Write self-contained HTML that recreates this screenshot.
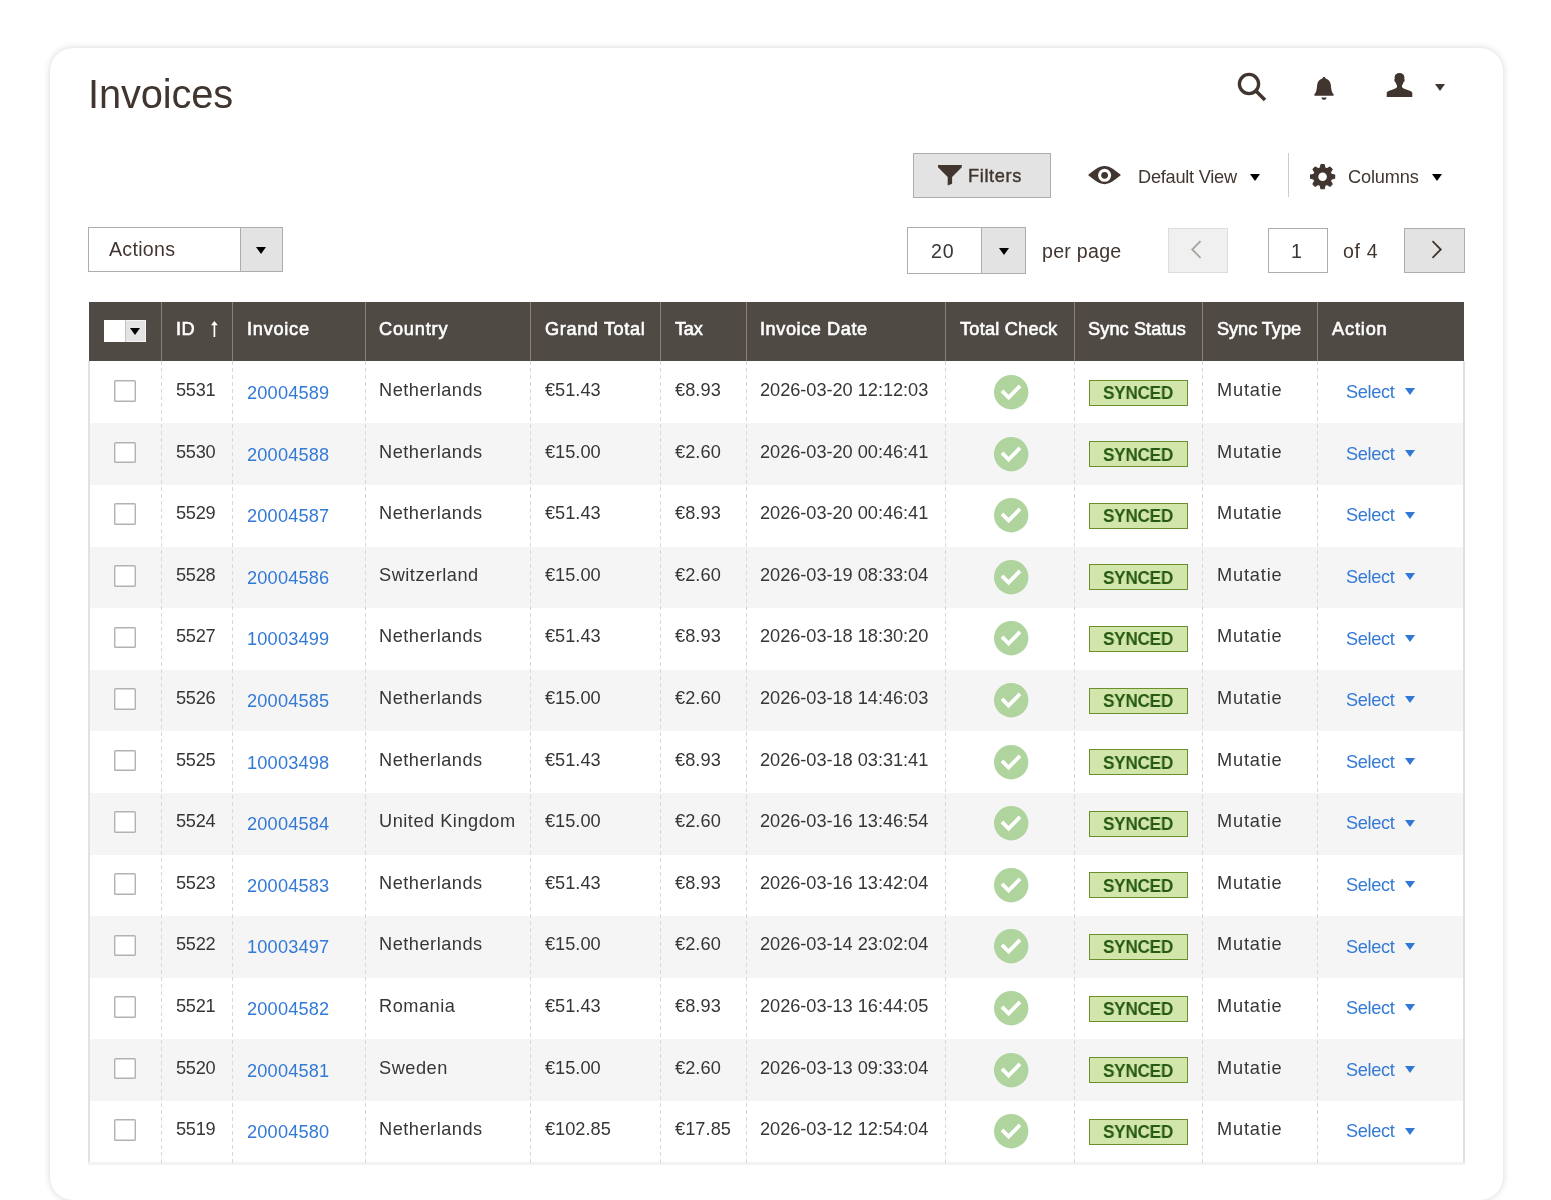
<!DOCTYPE html>
<html lang="en">
<head>
<meta charset="utf-8">
<title>Invoices</title>
<style>
html,body{margin:0;padding:0;background:#fff;}
body{width:1551px;height:1200px;position:relative;overflow:hidden;font-family:"Liberation Sans",sans-serif;}
.card{position:absolute;left:50px;top:48px;width:1453px;height:1152px;background:#fff;border-radius:23px;box-shadow:0 0 7px rgba(0,0,0,.17);}
.t{position:absolute;white-space:pre;line-height:1;display:block;}
.t{line-height:1em;will-change:transform;}
.sb{-webkit-text-stroke:0.6px currentColor;}
.sb.f{-webkit-text-stroke-width:0.4px;}
.abs{position:absolute;box-sizing:border-box;}
.btn{background:#e3e3e3;border:1px solid #adadad;}
.box{background:#fff;border:1px solid #adadad;}
svg{position:absolute;overflow:visible;}
.car{position:absolute;width:0;height:0;border-left:5.8px solid transparent;border-right:5.8px solid transparent;border-top:7.3px solid #000;}
/* table */
.thead{position:absolute;left:89px;top:302px;width:1375px;height:58.6px;background:#504a44;}
.thead i{position:absolute;top:0;width:1.4px;margin-left:-0.2px;height:100%;background:#88817d;}
.row{position:absolute;left:88px;width:1377px;background:#fff;}
.row.alt{background:#f5f5f5;}
.row .t{margin-left:-88px;}
.vl{position:absolute;top:360.6px;height:804px;width:1.4px;margin-left:-0.2px;background:repeating-linear-gradient(180deg,#d8d8d8 0,#d8d8d8 4.2px,transparent 4.2px,transparent 7px);}
.cb{position:absolute;left:26.35px;top:18.35px;width:21.65px;height:21.65px;box-shadow:inset 0 0 0 1.4px #b2b2b2;border-radius:1.6px;background:#fff;}
.badge{position:absolute;left:1001px;top:17.8px;width:97px;height:24px;border:1px solid #6a8f2c;background:#d2e5ab;}
.row .ok{left:906px;top:13.3px;width:34.4px;height:34.4px;}
.row .car{left:1317px;top:26.7px;border-left-width:5px;border-right-width:5px;border-top:7px solid #2f78d6;}
.row .t{z-index:2;}
</style>
</head>
<body>
<div class="card"></div>

<!-- header icons -->
<svg style="left:1236px;top:71px" width="32" height="32" viewBox="0 0 32 32"><circle cx="13" cy="13" r="9.6" fill="none" stroke="#41362f" stroke-width="3.3"/><path d="M20 20l9 9" stroke="#41362f" stroke-width="3.6" fill="none"/></svg>
<svg style="left:1313px;top:76.8px" width="22" height="25" viewBox="0 0 22 25"><path fill="#41362f" d="M11 0c.9 0 1.5.6 1.6 1.5 3.300.9 5 3.400 5.300 7 .3 4.200.9 6.800 2.600 8.800.4.500.4 1.200-.3 1.500H1.800c-.700-.300-.700-1-.300-1.500 1.700-2 2.300-4.600 2.600-8.800.3-3.600 2-6.100 5.300-7C9.500.6 10.100 0 11 0zM8.400 20.500h5.200c-.2 1.400-1.200 2.300-2.600 2.300s-2.400-.9-2.600-2.300z"/></svg>
<svg style="left:1386px;top:72.500px" width="27" height="24" viewBox="0 0 27 24"><path fill="#41362f" d="M13.500 0c3 0 4.900 1.700 4.900 4.300 0 .7-.1 1.300-.2 1.800.5.300.6 1.100.3 2-.2.700-.600 1.100-1 1.200-.3 1.300-.9 2.400-1.500 3.100v1.500c.6 1 1.700 1.600 3.600 2.300l4.800 1.800c1.200.5 1.900 1.200 1.900 2.400V24H.7v-3.600c0-1.200.7-1.900 1.900-2.400l4.800-1.800c1.900-.7 3-1.300 3.600-2.300v-1.500c-.6-.7-1.200-1.800-1.500-3.100-.4-.1-.8-.5-1-1.200-.3-.9-.2-1.700.3-2-.1-.5-.2-1.100-.2-1.800C8.600 1.700 10.500 0 13.500 0z"/></svg>
<i class="car" style="left:1434.500px;top:84px;border-top-color:#41362f"></i>

<!-- toolbar -->
<div class="abs btn" style="left:913px;top:153px;width:138px;height:45px"></div>
<svg style="left:938.200px;top:165px" width="23.800" height="20.500" viewBox="0 0 23.800 20.500"><path fill="#41362f" d="M0 0h23.800v2.200L14.100 12v6.800L9.700 20.500V12L0 2.200z"/></svg>
<svg style="left:1087.7px;top:165.9px" width="33" height="18.2" viewBox="0 0 33 18.2"><path fill="#41362f" d="M0 9.1C5 5.2 10.500 0 16.500 0S28 5.200 33 9.100C28 13 22.500 18.200 16.500 18.200S5 13 0 9.100z"/><circle cx="16.600" cy="9.300" r="6.500" fill="#fff"/><circle cx="16.600" cy="9.300" r="3.400" fill="#41362f"/></svg>
<i class="car" style="left:1250.200px;top:174px"></i>
<div class="abs" style="left:1288px;top:153px;width:1px;height:44px;background:#ccc"></div>
<svg style="left:1309.7px;top:163.6px" width="25.2" height="25.4" viewBox="-12.6 -12.7 25.2 25.4"><path d="M-2.48 -8.65L-1.59 -12.10L1.59 -12.10L2.48 -8.65L4.36 -7.87L7.43 -9.68L9.68 -7.43L7.87 -4.36L8.65 -2.48L12.10 -1.59L12.10 1.59L8.65 2.48L7.87 4.36L9.68 7.43L7.43 9.68L4.36 7.87L2.48 8.65L1.59 12.10L-1.59 12.10L-2.48 8.65L-4.36 7.87L-7.43 9.68L-9.68 7.43L-7.87 4.36L-8.65 2.48L-12.10 1.59L-12.10 -1.59L-8.65 -2.48L-7.87 -4.36L-9.68 -7.43L-7.43 -9.68L-4.36 -7.87Z" fill="#41362f" stroke="#41362f" stroke-width="1.1" stroke-linejoin="round"/><circle r="4.3" fill="#fff"/></svg>
<i class="car" style="left:1431.500px;top:174px"></i>

<!-- actions / paging -->
<div class="abs box" style="left:88px;top:227px;width:195px;height:45px"></div>
<div class="abs btn" style="left:240px;top:227px;width:43px;height:45px"></div>
<i class="car" style="left:256px;top:246.500px"></i>

<div class="abs box" style="left:907px;top:227px;width:119px;height:46.500px"></div>
<div class="abs btn" style="left:981px;top:227px;width:45px;height:46.500px"></div>
<i class="car" style="left:999px;top:248px"></i>

<div class="abs" style="left:1168px;top:228px;width:60px;height:45px;background:#f0f0f0;border:1px solid #ddd"></div>
<svg style="left:1190px;top:240px" width="12" height="19" viewBox="0 0 12 19"><path d="M10.500 1.200L2.200 9.500l8.300 8.300" fill="none" stroke="#a9a39e" stroke-width="1.800"/></svg>
<div class="abs box" style="left:1268px;top:228px;width:60px;height:45px"></div>
<div class="abs btn" style="left:1404px;top:228px;width:61px;height:45px"></div>
<svg style="left:1430.500px;top:240px" width="12" height="19" viewBox="0 0 12 19"><path d="M1.500 1.200l8.300 8.300-8.300 8.300" fill="none" stroke="#41362f" stroke-width="1.800"/></svg>

<!-- table header -->
<div class="thead">
<i style="left:72px"></i><i style="left:143px"></i><i style="left:276px"></i><i style="left:441px"></i><i style="left:571px"></i><i style="left:657px"></i><i style="left:856px"></i><i style="left:985px"></i><i style="left:1113px"></i><i style="left:1228px"></i>
<div class="abs" style="left:15px;top:18px;width:42px;height:22px;background:#e3e3e3;border:1px solid #f4f4f4;border-left:0"></div>
<div class="abs" style="left:15px;top:18px;width:21.500px;height:22px;background:#fff;border-right:1px solid #c4c4c4"></div>
<i class="car" style="left:41.5px;top:26px;background:none;width:0;height:0"></i>
<svg style="left:121.500px;top:18.500px" width="6.800" height="16" viewBox="0 0 6.800 16"><path d="M3.400 16V2" fill="none" stroke="#fff" stroke-width="1.700"/><path d="M3.400 0L6.800 4.300H0z" fill="#fff"/></svg>
</div>

<!-- rows -->
<div class="row" style="top:361.80px;height:61.60px"><i class="cb"></i><span class="t" style="left:176.05px;top:19.19px;font-size:18.2px;font-weight:400;color:#363636;letter-spacing:-0.295px">5531</span><span class="t" style="left:247.05px;top:22.29px;font-size:18.2px;font-weight:400;color:#3379d6;letter-spacing:0.184px">20004589</span><span class="t" style="left:378.59px;top:19.19px;font-size:18.2px;font-weight:400;color:#363636;letter-spacing:0.514px">Netherlands</span><span class="t" style="left:544.79px;top:19.19px;font-size:18.2px;font-weight:400;color:#363636;letter-spacing:0.005px">€51.43</span><span class="t" style="left:674.79px;top:19.19px;font-size:18.2px;font-weight:400;color:#363636;letter-spacing:0.060px">€8.93</span><span class="t" style="left:760.25px;top:19.19px;font-size:18.2px;font-weight:400;color:#363636;letter-spacing:-0.033px">2026-03-20 12:12:03</span><span class="t" style="transform:scaleX(0.945);transform-origin:0 0;left:1103.34px;top:22.29px;font-size:18.2px;font-weight:700;color:#265a10;letter-spacing:-0.300px">SYNCED</span><span class="t" style="left:1217.39px;top:19.19px;font-size:18.2px;font-weight:400;color:#363636;letter-spacing:0.830px">Mutatie</span><span class="t" style="left:1345.81px;top:21.49px;font-size:18.2px;font-weight:400;color:#3379d6;letter-spacing:-0.332px">Select</span><i class="badge"></i><svg class="ok" viewBox="0 0 34.4 34.4"><circle cx="17.2" cy="17.2" r="17.2" fill="#b0d49e"/><path d="M8 15.900l6.600 6.600L26 10.900" fill="none" stroke="#fff" stroke-width="3.800"/></svg><i class="car"></i></div>
<div class="row alt" style="top:423.40px;height:61.60px"><i class="cb"></i><span class="t" style="left:176.05px;top:19.19px;font-size:18.2px;font-weight:400;color:#363636;letter-spacing:-0.295px">5530</span><span class="t" style="left:247.05px;top:22.29px;font-size:18.2px;font-weight:400;color:#3379d6;letter-spacing:0.184px">20004588</span><span class="t" style="left:378.59px;top:19.19px;font-size:18.2px;font-weight:400;color:#363636;letter-spacing:0.514px">Netherlands</span><span class="t" style="left:544.79px;top:19.19px;font-size:18.2px;font-weight:400;color:#363636;letter-spacing:0.005px">€15.00</span><span class="t" style="left:674.79px;top:19.19px;font-size:18.2px;font-weight:400;color:#363636;letter-spacing:0.060px">€2.60</span><span class="t" style="left:760.25px;top:19.19px;font-size:18.2px;font-weight:400;color:#363636;letter-spacing:-0.033px">2026-03-20 00:46:41</span><span class="t" style="transform:scaleX(0.945);transform-origin:0 0;left:1103.34px;top:22.29px;font-size:18.2px;font-weight:700;color:#265a10;letter-spacing:-0.300px">SYNCED</span><span class="t" style="left:1217.39px;top:19.19px;font-size:18.2px;font-weight:400;color:#363636;letter-spacing:0.830px">Mutatie</span><span class="t" style="left:1345.81px;top:21.49px;font-size:18.2px;font-weight:400;color:#3379d6;letter-spacing:-0.332px">Select</span><i class="badge"></i><svg class="ok" viewBox="0 0 34.4 34.4"><circle cx="17.2" cy="17.2" r="17.2" fill="#b0d49e"/><path d="M8 15.900l6.600 6.600L26 10.900" fill="none" stroke="#fff" stroke-width="3.800"/></svg><i class="car"></i></div>
<div class="row" style="top:485.00px;height:61.60px"><i class="cb"></i><span class="t" style="left:176.05px;top:19.19px;font-size:18.2px;font-weight:400;color:#363636;letter-spacing:-0.295px">5529</span><span class="t" style="left:247.05px;top:22.29px;font-size:18.2px;font-weight:400;color:#3379d6;letter-spacing:0.184px">20004587</span><span class="t" style="left:378.59px;top:19.19px;font-size:18.2px;font-weight:400;color:#363636;letter-spacing:0.514px">Netherlands</span><span class="t" style="left:544.79px;top:19.19px;font-size:18.2px;font-weight:400;color:#363636;letter-spacing:0.005px">€51.43</span><span class="t" style="left:674.79px;top:19.19px;font-size:18.2px;font-weight:400;color:#363636;letter-spacing:0.060px">€8.93</span><span class="t" style="left:760.25px;top:19.19px;font-size:18.2px;font-weight:400;color:#363636;letter-spacing:-0.033px">2026-03-20 00:46:41</span><span class="t" style="transform:scaleX(0.945);transform-origin:0 0;left:1103.34px;top:22.29px;font-size:18.2px;font-weight:700;color:#265a10;letter-spacing:-0.300px">SYNCED</span><span class="t" style="left:1217.39px;top:19.19px;font-size:18.2px;font-weight:400;color:#363636;letter-spacing:0.830px">Mutatie</span><span class="t" style="left:1345.81px;top:21.49px;font-size:18.2px;font-weight:400;color:#3379d6;letter-spacing:-0.332px">Select</span><i class="badge"></i><svg class="ok" viewBox="0 0 34.4 34.4"><circle cx="17.2" cy="17.2" r="17.2" fill="#b0d49e"/><path d="M8 15.900l6.600 6.600L26 10.900" fill="none" stroke="#fff" stroke-width="3.800"/></svg><i class="car"></i></div>
<div class="row alt" style="top:546.60px;height:61.60px"><i class="cb"></i><span class="t" style="left:176.05px;top:19.19px;font-size:18.2px;font-weight:400;color:#363636;letter-spacing:-0.295px">5528</span><span class="t" style="left:247.05px;top:22.29px;font-size:18.2px;font-weight:400;color:#3379d6;letter-spacing:0.184px">20004586</span><span class="t" style="left:378.59px;top:19.19px;font-size:18.2px;font-weight:400;color:#363636;letter-spacing:0.514px">Switzerland</span><span class="t" style="left:544.79px;top:19.19px;font-size:18.2px;font-weight:400;color:#363636;letter-spacing:0.005px">€15.00</span><span class="t" style="left:674.79px;top:19.19px;font-size:18.2px;font-weight:400;color:#363636;letter-spacing:0.060px">€2.60</span><span class="t" style="left:760.25px;top:19.19px;font-size:18.2px;font-weight:400;color:#363636;letter-spacing:-0.033px">2026-03-19 08:33:04</span><span class="t" style="transform:scaleX(0.945);transform-origin:0 0;left:1103.34px;top:22.29px;font-size:18.2px;font-weight:700;color:#265a10;letter-spacing:-0.300px">SYNCED</span><span class="t" style="left:1217.39px;top:19.19px;font-size:18.2px;font-weight:400;color:#363636;letter-spacing:0.830px">Mutatie</span><span class="t" style="left:1345.81px;top:21.49px;font-size:18.2px;font-weight:400;color:#3379d6;letter-spacing:-0.332px">Select</span><i class="badge"></i><svg class="ok" viewBox="0 0 34.4 34.4"><circle cx="17.2" cy="17.2" r="17.2" fill="#b0d49e"/><path d="M8 15.900l6.600 6.600L26 10.900" fill="none" stroke="#fff" stroke-width="3.800"/></svg><i class="car"></i></div>
<div class="row" style="top:608.20px;height:61.60px"><i class="cb"></i><span class="t" style="left:176.05px;top:19.19px;font-size:18.2px;font-weight:400;color:#363636;letter-spacing:-0.295px">5527</span><span class="t" style="left:247.05px;top:22.29px;font-size:18.2px;font-weight:400;color:#3379d6;letter-spacing:0.184px">10003499</span><span class="t" style="left:378.59px;top:19.19px;font-size:18.2px;font-weight:400;color:#363636;letter-spacing:0.514px">Netherlands</span><span class="t" style="left:544.79px;top:19.19px;font-size:18.2px;font-weight:400;color:#363636;letter-spacing:0.005px">€51.43</span><span class="t" style="left:674.79px;top:19.19px;font-size:18.2px;font-weight:400;color:#363636;letter-spacing:0.060px">€8.93</span><span class="t" style="left:760.25px;top:19.19px;font-size:18.2px;font-weight:400;color:#363636;letter-spacing:-0.033px">2026-03-18 18:30:20</span><span class="t" style="transform:scaleX(0.945);transform-origin:0 0;left:1103.34px;top:22.29px;font-size:18.2px;font-weight:700;color:#265a10;letter-spacing:-0.300px">SYNCED</span><span class="t" style="left:1217.39px;top:19.19px;font-size:18.2px;font-weight:400;color:#363636;letter-spacing:0.830px">Mutatie</span><span class="t" style="left:1345.81px;top:21.49px;font-size:18.2px;font-weight:400;color:#3379d6;letter-spacing:-0.332px">Select</span><i class="badge"></i><svg class="ok" viewBox="0 0 34.4 34.4"><circle cx="17.2" cy="17.2" r="17.2" fill="#b0d49e"/><path d="M8 15.900l6.600 6.600L26 10.900" fill="none" stroke="#fff" stroke-width="3.800"/></svg><i class="car"></i></div>
<div class="row alt" style="top:669.80px;height:61.60px"><i class="cb"></i><span class="t" style="left:176.05px;top:19.19px;font-size:18.2px;font-weight:400;color:#363636;letter-spacing:-0.295px">5526</span><span class="t" style="left:247.05px;top:22.29px;font-size:18.2px;font-weight:400;color:#3379d6;letter-spacing:0.184px">20004585</span><span class="t" style="left:378.59px;top:19.19px;font-size:18.2px;font-weight:400;color:#363636;letter-spacing:0.514px">Netherlands</span><span class="t" style="left:544.79px;top:19.19px;font-size:18.2px;font-weight:400;color:#363636;letter-spacing:0.005px">€15.00</span><span class="t" style="left:674.79px;top:19.19px;font-size:18.2px;font-weight:400;color:#363636;letter-spacing:0.060px">€2.60</span><span class="t" style="left:760.25px;top:19.19px;font-size:18.2px;font-weight:400;color:#363636;letter-spacing:-0.033px">2026-03-18 14:46:03</span><span class="t" style="transform:scaleX(0.945);transform-origin:0 0;left:1103.34px;top:22.29px;font-size:18.2px;font-weight:700;color:#265a10;letter-spacing:-0.300px">SYNCED</span><span class="t" style="left:1217.39px;top:19.19px;font-size:18.2px;font-weight:400;color:#363636;letter-spacing:0.830px">Mutatie</span><span class="t" style="left:1345.81px;top:21.49px;font-size:18.2px;font-weight:400;color:#3379d6;letter-spacing:-0.332px">Select</span><i class="badge"></i><svg class="ok" viewBox="0 0 34.4 34.4"><circle cx="17.2" cy="17.2" r="17.2" fill="#b0d49e"/><path d="M8 15.900l6.600 6.600L26 10.900" fill="none" stroke="#fff" stroke-width="3.800"/></svg><i class="car"></i></div>
<div class="row" style="top:731.40px;height:61.60px"><i class="cb"></i><span class="t" style="left:176.05px;top:19.19px;font-size:18.2px;font-weight:400;color:#363636;letter-spacing:-0.295px">5525</span><span class="t" style="left:247.05px;top:22.29px;font-size:18.2px;font-weight:400;color:#3379d6;letter-spacing:0.184px">10003498</span><span class="t" style="left:378.59px;top:19.19px;font-size:18.2px;font-weight:400;color:#363636;letter-spacing:0.514px">Netherlands</span><span class="t" style="left:544.79px;top:19.19px;font-size:18.2px;font-weight:400;color:#363636;letter-spacing:0.005px">€51.43</span><span class="t" style="left:674.79px;top:19.19px;font-size:18.2px;font-weight:400;color:#363636;letter-spacing:0.060px">€8.93</span><span class="t" style="left:760.25px;top:19.19px;font-size:18.2px;font-weight:400;color:#363636;letter-spacing:-0.033px">2026-03-18 03:31:41</span><span class="t" style="transform:scaleX(0.945);transform-origin:0 0;left:1103.34px;top:22.29px;font-size:18.2px;font-weight:700;color:#265a10;letter-spacing:-0.300px">SYNCED</span><span class="t" style="left:1217.39px;top:19.19px;font-size:18.2px;font-weight:400;color:#363636;letter-spacing:0.830px">Mutatie</span><span class="t" style="left:1345.81px;top:21.49px;font-size:18.2px;font-weight:400;color:#3379d6;letter-spacing:-0.332px">Select</span><i class="badge"></i><svg class="ok" viewBox="0 0 34.4 34.4"><circle cx="17.2" cy="17.2" r="17.2" fill="#b0d49e"/><path d="M8 15.900l6.600 6.600L26 10.900" fill="none" stroke="#fff" stroke-width="3.800"/></svg><i class="car"></i></div>
<div class="row alt" style="top:793.00px;height:61.60px"><i class="cb"></i><span class="t" style="left:176.05px;top:19.19px;font-size:18.2px;font-weight:400;color:#363636;letter-spacing:-0.295px">5524</span><span class="t" style="left:247.05px;top:22.29px;font-size:18.2px;font-weight:400;color:#3379d6;letter-spacing:0.184px">20004584</span><span class="t" style="left:378.59px;top:19.19px;font-size:18.2px;font-weight:400;color:#363636;letter-spacing:0.514px">United Kingdom</span><span class="t" style="left:544.79px;top:19.19px;font-size:18.2px;font-weight:400;color:#363636;letter-spacing:0.005px">€15.00</span><span class="t" style="left:674.79px;top:19.19px;font-size:18.2px;font-weight:400;color:#363636;letter-spacing:0.060px">€2.60</span><span class="t" style="left:760.25px;top:19.19px;font-size:18.2px;font-weight:400;color:#363636;letter-spacing:-0.033px">2026-03-16 13:46:54</span><span class="t" style="transform:scaleX(0.945);transform-origin:0 0;left:1103.34px;top:22.29px;font-size:18.2px;font-weight:700;color:#265a10;letter-spacing:-0.300px">SYNCED</span><span class="t" style="left:1217.39px;top:19.19px;font-size:18.2px;font-weight:400;color:#363636;letter-spacing:0.830px">Mutatie</span><span class="t" style="left:1345.81px;top:21.49px;font-size:18.2px;font-weight:400;color:#3379d6;letter-spacing:-0.332px">Select</span><i class="badge"></i><svg class="ok" viewBox="0 0 34.4 34.4"><circle cx="17.2" cy="17.2" r="17.2" fill="#b0d49e"/><path d="M8 15.900l6.600 6.600L26 10.900" fill="none" stroke="#fff" stroke-width="3.800"/></svg><i class="car"></i></div>
<div class="row" style="top:854.60px;height:61.60px"><i class="cb"></i><span class="t" style="left:176.05px;top:19.19px;font-size:18.2px;font-weight:400;color:#363636;letter-spacing:-0.295px">5523</span><span class="t" style="left:247.05px;top:22.29px;font-size:18.2px;font-weight:400;color:#3379d6;letter-spacing:0.184px">20004583</span><span class="t" style="left:378.59px;top:19.19px;font-size:18.2px;font-weight:400;color:#363636;letter-spacing:0.514px">Netherlands</span><span class="t" style="left:544.79px;top:19.19px;font-size:18.2px;font-weight:400;color:#363636;letter-spacing:0.005px">€51.43</span><span class="t" style="left:674.79px;top:19.19px;font-size:18.2px;font-weight:400;color:#363636;letter-spacing:0.060px">€8.93</span><span class="t" style="left:760.25px;top:19.19px;font-size:18.2px;font-weight:400;color:#363636;letter-spacing:-0.033px">2026-03-16 13:42:04</span><span class="t" style="transform:scaleX(0.945);transform-origin:0 0;left:1103.34px;top:22.29px;font-size:18.2px;font-weight:700;color:#265a10;letter-spacing:-0.300px">SYNCED</span><span class="t" style="left:1217.39px;top:19.19px;font-size:18.2px;font-weight:400;color:#363636;letter-spacing:0.830px">Mutatie</span><span class="t" style="left:1345.81px;top:21.49px;font-size:18.2px;font-weight:400;color:#3379d6;letter-spacing:-0.332px">Select</span><i class="badge"></i><svg class="ok" viewBox="0 0 34.4 34.4"><circle cx="17.2" cy="17.2" r="17.2" fill="#b0d49e"/><path d="M8 15.900l6.600 6.600L26 10.900" fill="none" stroke="#fff" stroke-width="3.800"/></svg><i class="car"></i></div>
<div class="row alt" style="top:916.20px;height:61.60px"><i class="cb"></i><span class="t" style="left:176.05px;top:19.19px;font-size:18.2px;font-weight:400;color:#363636;letter-spacing:-0.295px">5522</span><span class="t" style="left:247.05px;top:22.29px;font-size:18.2px;font-weight:400;color:#3379d6;letter-spacing:0.184px">10003497</span><span class="t" style="left:378.59px;top:19.19px;font-size:18.2px;font-weight:400;color:#363636;letter-spacing:0.514px">Netherlands</span><span class="t" style="left:544.79px;top:19.19px;font-size:18.2px;font-weight:400;color:#363636;letter-spacing:0.005px">€15.00</span><span class="t" style="left:674.79px;top:19.19px;font-size:18.2px;font-weight:400;color:#363636;letter-spacing:0.060px">€2.60</span><span class="t" style="left:760.25px;top:19.19px;font-size:18.2px;font-weight:400;color:#363636;letter-spacing:-0.033px">2026-03-14 23:02:04</span><span class="t" style="transform:scaleX(0.945);transform-origin:0 0;left:1103.34px;top:22.29px;font-size:18.2px;font-weight:700;color:#265a10;letter-spacing:-0.300px">SYNCED</span><span class="t" style="left:1217.39px;top:19.19px;font-size:18.2px;font-weight:400;color:#363636;letter-spacing:0.830px">Mutatie</span><span class="t" style="left:1345.81px;top:21.49px;font-size:18.2px;font-weight:400;color:#3379d6;letter-spacing:-0.332px">Select</span><i class="badge"></i><svg class="ok" viewBox="0 0 34.4 34.4"><circle cx="17.2" cy="17.2" r="17.2" fill="#b0d49e"/><path d="M8 15.900l6.600 6.600L26 10.900" fill="none" stroke="#fff" stroke-width="3.800"/></svg><i class="car"></i></div>
<div class="row" style="top:977.80px;height:61.60px"><i class="cb"></i><span class="t" style="left:176.05px;top:19.19px;font-size:18.2px;font-weight:400;color:#363636;letter-spacing:-0.295px">5521</span><span class="t" style="left:247.05px;top:22.29px;font-size:18.2px;font-weight:400;color:#3379d6;letter-spacing:0.184px">20004582</span><span class="t" style="left:378.59px;top:19.19px;font-size:18.2px;font-weight:400;color:#363636;letter-spacing:0.514px">Romania</span><span class="t" style="left:544.79px;top:19.19px;font-size:18.2px;font-weight:400;color:#363636;letter-spacing:0.005px">€51.43</span><span class="t" style="left:674.79px;top:19.19px;font-size:18.2px;font-weight:400;color:#363636;letter-spacing:0.060px">€8.93</span><span class="t" style="left:760.25px;top:19.19px;font-size:18.2px;font-weight:400;color:#363636;letter-spacing:-0.033px">2026-03-13 16:44:05</span><span class="t" style="transform:scaleX(0.945);transform-origin:0 0;left:1103.34px;top:22.29px;font-size:18.2px;font-weight:700;color:#265a10;letter-spacing:-0.300px">SYNCED</span><span class="t" style="left:1217.39px;top:19.19px;font-size:18.2px;font-weight:400;color:#363636;letter-spacing:0.830px">Mutatie</span><span class="t" style="left:1345.81px;top:21.49px;font-size:18.2px;font-weight:400;color:#3379d6;letter-spacing:-0.332px">Select</span><i class="badge"></i><svg class="ok" viewBox="0 0 34.4 34.4"><circle cx="17.2" cy="17.2" r="17.2" fill="#b0d49e"/><path d="M8 15.900l6.600 6.600L26 10.900" fill="none" stroke="#fff" stroke-width="3.800"/></svg><i class="car"></i></div>
<div class="row alt" style="top:1039.40px;height:61.60px"><i class="cb"></i><span class="t" style="left:176.05px;top:19.19px;font-size:18.2px;font-weight:400;color:#363636;letter-spacing:-0.295px">5520</span><span class="t" style="left:247.05px;top:22.29px;font-size:18.2px;font-weight:400;color:#3379d6;letter-spacing:0.184px">20004581</span><span class="t" style="left:378.59px;top:19.19px;font-size:18.2px;font-weight:400;color:#363636;letter-spacing:0.514px">Sweden</span><span class="t" style="left:544.79px;top:19.19px;font-size:18.2px;font-weight:400;color:#363636;letter-spacing:0.005px">€15.00</span><span class="t" style="left:674.79px;top:19.19px;font-size:18.2px;font-weight:400;color:#363636;letter-spacing:0.060px">€2.60</span><span class="t" style="left:760.25px;top:19.19px;font-size:18.2px;font-weight:400;color:#363636;letter-spacing:-0.033px">2026-03-13 09:33:04</span><span class="t" style="transform:scaleX(0.945);transform-origin:0 0;left:1103.34px;top:22.29px;font-size:18.2px;font-weight:700;color:#265a10;letter-spacing:-0.300px">SYNCED</span><span class="t" style="left:1217.39px;top:19.19px;font-size:18.2px;font-weight:400;color:#363636;letter-spacing:0.830px">Mutatie</span><span class="t" style="left:1345.81px;top:21.49px;font-size:18.2px;font-weight:400;color:#3379d6;letter-spacing:-0.332px">Select</span><i class="badge"></i><svg class="ok" viewBox="0 0 34.4 34.4"><circle cx="17.2" cy="17.2" r="17.2" fill="#b0d49e"/><path d="M8 15.900l6.600 6.600L26 10.900" fill="none" stroke="#fff" stroke-width="3.800"/></svg><i class="car"></i></div>
<div class="row" style="top:1101.00px;height:61.60px"><i class="cb"></i><span class="t" style="left:176.05px;top:19.19px;font-size:18.2px;font-weight:400;color:#363636;letter-spacing:-0.295px">5519</span><span class="t" style="left:247.05px;top:22.29px;font-size:18.2px;font-weight:400;color:#3379d6;letter-spacing:0.184px">20004580</span><span class="t" style="left:378.59px;top:19.19px;font-size:18.2px;font-weight:400;color:#363636;letter-spacing:0.514px">Netherlands</span><span class="t" style="left:544.79px;top:19.19px;font-size:18.2px;font-weight:400;color:#363636;letter-spacing:0.005px">€102.85</span><span class="t" style="left:674.79px;top:19.19px;font-size:18.2px;font-weight:400;color:#363636;letter-spacing:0.060px">€17.85</span><span class="t" style="left:760.25px;top:19.19px;font-size:18.2px;font-weight:400;color:#363636;letter-spacing:-0.033px">2026-03-12 12:54:04</span><span class="t" style="transform:scaleX(0.945);transform-origin:0 0;left:1103.34px;top:22.29px;font-size:18.2px;font-weight:700;color:#265a10;letter-spacing:-0.300px">SYNCED</span><span class="t" style="left:1217.39px;top:19.19px;font-size:18.2px;font-weight:400;color:#363636;letter-spacing:0.830px">Mutatie</span><span class="t" style="left:1345.81px;top:21.49px;font-size:18.2px;font-weight:400;color:#3379d6;letter-spacing:-0.332px">Select</span><i class="badge"></i><svg class="ok" viewBox="0 0 34.4 34.4"><circle cx="17.2" cy="17.2" r="17.2" fill="#b0d49e"/><path d="M8 15.900l6.600 6.600L26 10.900" fill="none" stroke="#fff" stroke-width="3.800"/></svg><i class="car"></i></div>
<!-- table borders -->
<div class="abs" style="left:88px;top:360.6px;width:2px;height:803.4px;background:#e2e2e2"></div>
<div class="abs" style="left:1463px;top:360.6px;width:2px;height:804px;background:#e0e0e0"></div>
<div class="abs" style="left:88px;top:1162.2px;width:1377px;height:2.4px;background:#f3f3f3"></div>
<i class="vl" style="left:161px"></i><i class="vl" style="left:232px"></i><i class="vl" style="left:365px"></i><i class="vl" style="left:530px"></i><i class="vl" style="left:660px"></i><i class="vl" style="left:746px"></i><i class="vl" style="left:945px"></i><i class="vl" style="left:1074px"></i><i class="vl" style="left:1202px"></i><i class="vl" style="left:1317px"></i>
<!-- texts -->
<span class="t" style="left:87.82px;top:74.51px;font-size:39.8px;font-weight:400;color:#41362f;letter-spacing:-0.104px">Invoices</span>
<span class="t sb f" style="left:968.04px;top:167.09px;font-size:18.2px;font-weight:400;color:#41362f;letter-spacing:0.625px">Filters</span>
<span class="t" style="left:1138.09px;top:168.19px;font-size:18.2px;font-weight:400;color:#41362f;letter-spacing:-0.245px">Default View</span>
<span class="t" style="left:1347.75px;top:168.19px;font-size:18.2px;font-weight:400;color:#41362f;letter-spacing:-0.163px">Columns</span>
<span class="t" style="left:108.58px;top:239.91px;font-size:19.6px;font-weight:400;color:#41362f;letter-spacing:0.286px">Actions</span>
<span class="t" style="left:931.11px;top:241.81px;font-size:19.6px;font-weight:400;color:#363636;letter-spacing:0.778px">20</span>
<span class="t" style="left:1041.83px;top:241.81px;font-size:19.6px;font-weight:400;color:#41362f;letter-spacing:0.266px">per page</span>
<span class="t" style="left:1291.07px;top:241.81px;font-size:19.6px;font-weight:400;color:#363636;letter-spacing:0.000px">1</span>
<span class="t" style="left:1343.20px;top:241.81px;font-size:19.6px;font-weight:400;color:#41362f;letter-spacing:0.676px">of 4</span>
<span class="t sb" style="left:175.64px;top:320.09px;font-size:18.2px;font-weight:400;color:#ffffff;letter-spacing:0.412px">ID</span>
<span class="t sb" style="left:246.54px;top:320.09px;font-size:18.2px;font-weight:400;color:#ffffff;letter-spacing:0.733px">Invoice</span>
<span class="t sb" style="left:379.49px;top:320.09px;font-size:18.2px;font-weight:400;color:#ffffff;letter-spacing:0.807px">Country</span>
<span class="t sb" style="left:544.59px;top:320.09px;font-size:18.2px;font-weight:400;color:#ffffff;letter-spacing:0.605px">Grand Total</span>
<span class="t sb" style="left:675.00px;top:320.09px;font-size:18.2px;font-weight:400;color:#ffffff;letter-spacing:-0.261px">Tax</span>
<span class="t sb" style="left:759.74px;top:320.09px;font-size:18.2px;font-weight:400;color:#ffffff;letter-spacing:0.545px">Invoice Date</span>
<span class="t sb" style="left:960.30px;top:320.09px;font-size:18.2px;font-weight:400;color:#ffffff;letter-spacing:0.209px">Total Check</span>
<span class="t sb" style="left:1088.27px;top:320.09px;font-size:18.2px;font-weight:400;color:#ffffff;letter-spacing:0.083px">Sync Status</span>
<span class="t sb" style="left:1217.17px;top:320.09px;font-size:18.2px;font-weight:400;color:#ffffff;letter-spacing:-0.068px">Sync Type</span>
<span class="t sb" style="left:1332.30px;top:320.09px;font-size:18.2px;font-weight:400;color:#ffffff;letter-spacing:0.831px">Action</span>
</body>
</html>
